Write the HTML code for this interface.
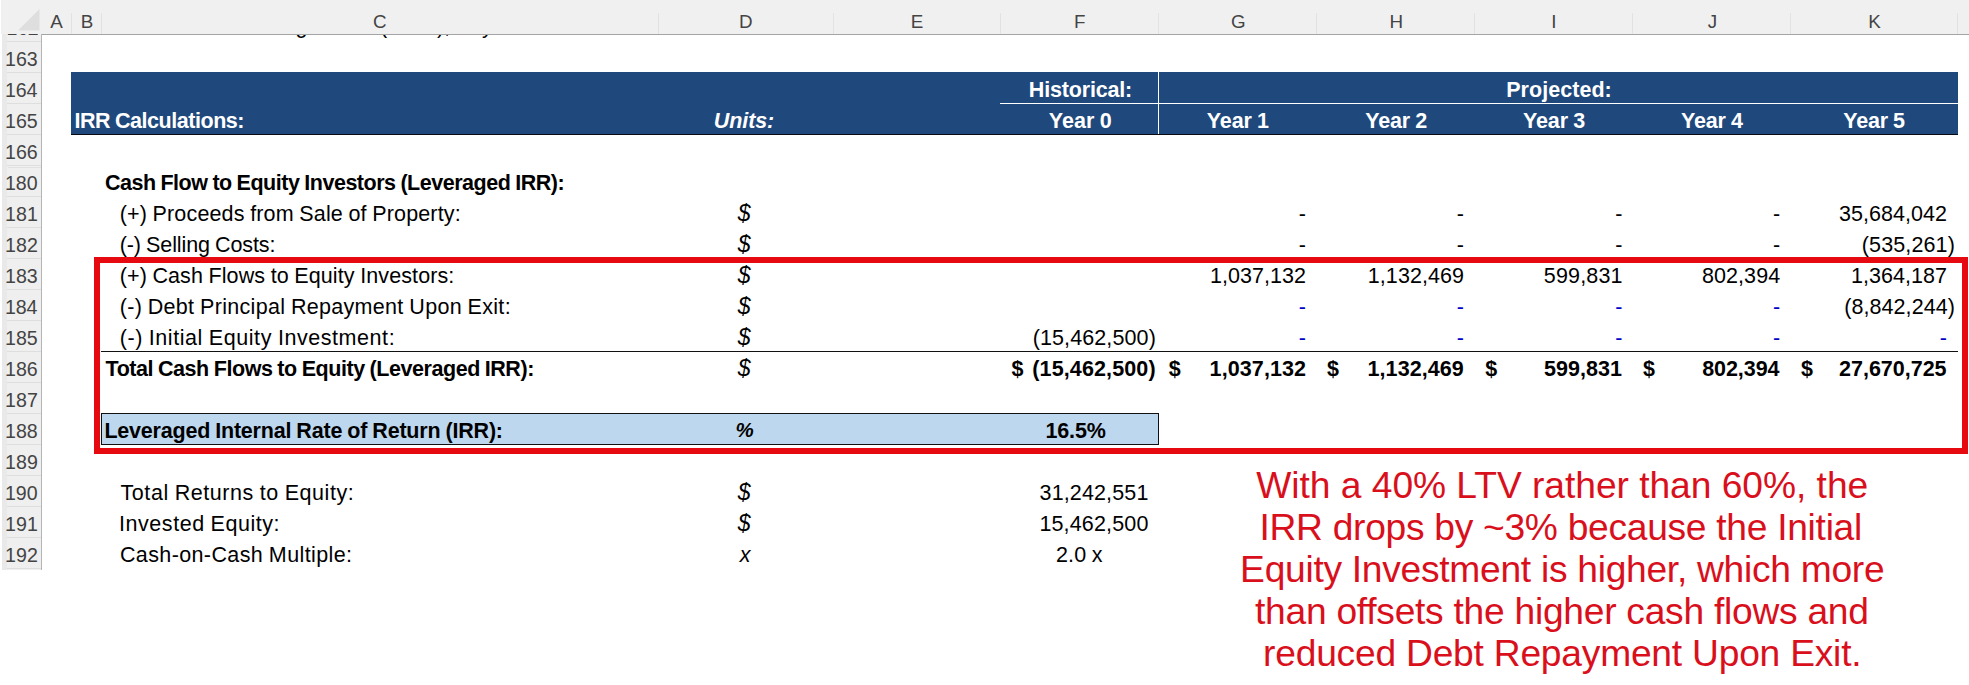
<!DOCTYPE html>
<html lang="en"><head><meta charset="utf-8"><title>IRR Calculations</title>
<style>
html,body{margin:0;padding:0;background:#fff}
body{width:1969px;height:685px;position:relative;overflow:hidden;font-family:"Liberation Sans",sans-serif}
.r{position:absolute}
.t{position:absolute;white-space:nowrap;line-height:1;font-family:"Liberation Sans",sans-serif;color:#000}
.b{font-weight:700}
.i{font-style:italic}
.note{position:absolute;text-align:center;white-space:nowrap;font-family:"Liberation Sans",sans-serif}
</style></head><body>
<div class="r" style="left:1px;top:0px;width:1968px;height:34px;background:#f0f0f0;"></div>
<div class="r" style="left:41px;top:34px;width:1928px;height:1px;background:#a4a4a4;"></div>
<div class="r" style="left:2px;top:34px;width:39px;height:536px;background:#efefef;"></div>
<div class="r" style="left:2px;top:34px;width:5px;height:536px;background:#e9e9e9;"></div>
<div class="r" style="left:41px;top:34px;width:1px;height:536px;background:#b4b4b4;"></div>
<svg class="r" style="left:0;top:0" width="42" height="34"><polygon points="39.5,9 39.5,30.5 18,30.5" fill="#dedede"/></svg>
<div class="r" style="left:71px;top:13px;width:1px;height:21px;background:#e2e2e2;"></div>
<div class="r" style="left:101px;top:13px;width:1px;height:21px;background:#e2e2e2;"></div>
<div class="r" style="left:658px;top:13px;width:1px;height:21px;background:#e2e2e2;"></div>
<div class="r" style="left:833px;top:13px;width:1px;height:21px;background:#e2e2e2;"></div>
<div class="r" style="left:1000px;top:13px;width:1px;height:21px;background:#e2e2e2;"></div>
<div class="r" style="left:1158px;top:13px;width:1px;height:21px;background:#e2e2e2;"></div>
<div class="r" style="left:1316px;top:13px;width:1px;height:21px;background:#e2e2e2;"></div>
<div class="r" style="left:1474px;top:13px;width:1px;height:21px;background:#e2e2e2;"></div>
<div class="r" style="left:1632px;top:13px;width:1px;height:21px;background:#e2e2e2;"></div>
<div class="r" style="left:1790px;top:13px;width:1px;height:21px;background:#e2e2e2;"></div>
<div class="r" style="left:1957px;top:13px;width:1px;height:21px;background:#e2e2e2;"></div>
<div class="t" style="left:50.15px;top:12.69px;font-size:18.8px;color:#444;">A</div>
<div class="t" style="left:80.67px;top:12.69px;font-size:18.8px;color:#444;">B</div>
<div class="t" style="left:373.09px;top:12.69px;font-size:18.8px;color:#444;">C</div>
<div class="t" style="left:739.00px;top:12.69px;font-size:18.8px;color:#444;">D</div>
<div class="t" style="left:910.87px;top:12.69px;font-size:18.8px;color:#444;">E</div>
<div class="t" style="left:1074.04px;top:12.69px;font-size:18.8px;color:#444;">F</div>
<div class="t" style="left:1230.90px;top:12.69px;font-size:18.8px;color:#444;">G</div>
<div class="t" style="left:1389.39px;top:12.69px;font-size:18.8px;color:#444;">H</div>
<div class="t" style="left:1551.17px;top:12.69px;font-size:18.8px;color:#444;">I</div>
<div class="t" style="left:1707.82px;top:12.69px;font-size:18.8px;color:#444;">J</div>
<div class="t" style="left:1868.24px;top:12.69px;font-size:18.8px;color:#444;">K</div>
<div class="r" style="left:7px;top:41px;width:34px;height:1px;background:#dedede;"></div>
<div class="r" style="left:7px;top:72px;width:34px;height:1px;background:#dedede;"></div>
<div class="t" style="left:4.93px;top:49.91px;font-size:19.6px;letter-spacing:0.060px;color:#444;">163</div>
<div class="r" style="left:7px;top:103px;width:34px;height:1px;background:#dedede;"></div>
<div class="t" style="left:4.93px;top:80.91px;font-size:19.6px;letter-spacing:-0.087px;color:#444;">164</div>
<div class="r" style="left:7px;top:134px;width:34px;height:1px;background:#dedede;"></div>
<div class="t" style="left:4.93px;top:111.91px;font-size:19.6px;letter-spacing:0.060px;color:#444;">165</div>
<div class="r" style="left:7px;top:165px;width:34px;height:1px;background:#dedede;"></div>
<div class="t" style="left:4.93px;top:142.91px;font-size:19.6px;letter-spacing:0.060px;color:#444;">166</div>
<div class="r" style="left:7px;top:196px;width:34px;height:1px;background:#dedede;"></div>
<div class="t" style="left:4.93px;top:173.91px;font-size:19.6px;letter-spacing:0.011px;color:#444;">180</div>
<div class="r" style="left:7px;top:227px;width:34px;height:1px;background:#dedede;"></div>
<div class="t" style="left:4.93px;top:204.91px;font-size:19.6px;letter-spacing:0.109px;color:#444;">181</div>
<div class="r" style="left:7px;top:258px;width:34px;height:1px;background:#dedede;"></div>
<div class="t" style="left:4.93px;top:235.91px;font-size:19.6px;letter-spacing:0.109px;color:#444;">182</div>
<div class="r" style="left:7px;top:289px;width:34px;height:1px;background:#dedede;"></div>
<div class="t" style="left:4.93px;top:266.91px;font-size:19.6px;letter-spacing:0.060px;color:#444;">183</div>
<div class="r" style="left:7px;top:320px;width:34px;height:1px;background:#dedede;"></div>
<div class="t" style="left:4.93px;top:297.91px;font-size:19.6px;letter-spacing:-0.087px;color:#444;">184</div>
<div class="r" style="left:7px;top:351px;width:34px;height:1px;background:#dedede;"></div>
<div class="t" style="left:4.93px;top:328.91px;font-size:19.6px;letter-spacing:0.060px;color:#444;">185</div>
<div class="r" style="left:7px;top:382px;width:34px;height:1px;background:#dedede;"></div>
<div class="t" style="left:4.93px;top:359.91px;font-size:19.6px;letter-spacing:0.060px;color:#444;">186</div>
<div class="r" style="left:7px;top:413px;width:34px;height:1px;background:#dedede;"></div>
<div class="t" style="left:4.93px;top:390.91px;font-size:19.6px;letter-spacing:0.109px;color:#444;">187</div>
<div class="r" style="left:7px;top:444px;width:34px;height:1px;background:#dedede;"></div>
<div class="t" style="left:4.93px;top:421.91px;font-size:19.6px;letter-spacing:0.060px;color:#444;">188</div>
<div class="r" style="left:7px;top:475px;width:34px;height:1px;background:#dedede;"></div>
<div class="t" style="left:4.93px;top:452.91px;font-size:19.6px;letter-spacing:0.109px;color:#444;">189</div>
<div class="r" style="left:7px;top:506px;width:34px;height:1px;background:#dedede;"></div>
<div class="t" style="left:4.93px;top:483.91px;font-size:19.6px;letter-spacing:0.011px;color:#444;">190</div>
<div class="r" style="left:7px;top:537px;width:34px;height:1px;background:#dedede;"></div>
<div class="t" style="left:4.93px;top:514.91px;font-size:19.6px;letter-spacing:0.109px;color:#444;">191</div>
<div class="r" style="left:7px;top:568px;width:34px;height:1px;background:#dedede;"></div>
<div class="t" style="left:4.93px;top:545.91px;font-size:19.6px;letter-spacing:0.109px;color:#444;">192</div>
<div class="r" style="left:8px;top:167px;width:33px;height:1px;background:#e2e2e2;"></div>
<div class="r" style="left:2px;top:34px;width:39px;height:1px;overflow:hidden"><div class="t" style="left:4.6px;top:-15.4px;font-size:19.6px;letter-spacing:-0.3px;color:#444">162</div></div>
<div class="r" style="left:101px;top:35px;width:560px;height:5px;overflow:hidden"><div class="t" style="left:194.5px;top:-19.2px;font-size:21.5px">g</div><div class="t" style="left:279px;top:-19.2px;font-size:21.5px">(</div><div class="t" style="left:336px;top:-19.2px;font-size:21.5px">),</div><div class="t" style="left:381px;top:-19.2px;font-size:21.5px">y</div></div>
<div class="r" style="left:71px;top:72px;width:1887px;height:62px;background:#1f497d;"></div>
<div class="r" style="left:71px;top:134px;width:1887px;height:1px;background:#0a0a14;"></div>
<div class="r" style="left:1000px;top:103px;width:958px;height:1px;background:#fff;"></div>
<div class="r" style="left:1158px;top:72px;width:1px;height:62px;background:#fff;"></div>
<div class="t b" style="left:74.40px;top:110.80px;font-size:21.5px;word-spacing:-0.6px;letter-spacing:-0.455px;color:#fff;">IRR Calculations:</div>
<div class="t b i" style="left:713.82px;top:111.00px;font-size:21.5px;letter-spacing:-0.099px;color:#fff;">Units:</div>
<div class="t b" style="left:1028.80px;top:80.40px;font-size:21.5px;letter-spacing:-0.169px;color:#fff;">Historical:</div>
<div class="t b" style="left:1506.20px;top:80.40px;font-size:21.5px;letter-spacing:0.045px;color:#fff;">Projected:</div>
<div class="t b" style="left:1048.68px;top:111.00px;font-size:21.5px;word-spacing:-0.6px;letter-spacing:0.072px;color:#fff;">Year 0</div>
<div class="t b" style="left:1206.68px;top:111.00px;font-size:21.5px;word-spacing:-0.6px;letter-spacing:-0.072px;color:#fff;">Year 1</div>
<div class="t b" style="left:1365.28px;top:111.00px;font-size:21.5px;word-spacing:-0.6px;letter-spacing:-0.188px;color:#fff;">Year 2</div>
<div class="t b" style="left:1522.98px;top:111.00px;font-size:21.5px;word-spacing:-0.6px;letter-spacing:-0.108px;color:#fff;">Year 3</div>
<div class="t b" style="left:1681.08px;top:111.00px;font-size:21.5px;word-spacing:-0.6px;letter-spacing:-0.199px;color:#fff;">Year 4</div>
<div class="t b" style="left:1843.28px;top:111.00px;font-size:21.5px;word-spacing:-0.6px;letter-spacing:-0.211px;color:#fff;">Year 5</div>
<div class="t b" style="left:104.94px;top:172.70px;font-size:21.5px;word-spacing:-0.6px;letter-spacing:-0.483px;">Cash Flow to Equity Investors (Leveraged IRR):</div>
<div class="t" style="left:119.71px;top:203.70px;font-size:21.5px;word-spacing:-0.6px;letter-spacing:0.153px;">(+) Proceeds from Sale of Property:</div>
<div class="t" style="left:119.71px;top:234.70px;font-size:21.5px;word-spacing:-0.6px;letter-spacing:-0.116px;">(-) Selling Costs:</div>
<div class="t" style="left:119.71px;top:265.70px;font-size:21.5px;word-spacing:-0.6px;letter-spacing:0.107px;">(+) Cash Flows to Equity Investors:</div>
<div class="t" style="left:119.71px;top:296.70px;font-size:21.5px;word-spacing:-0.6px;letter-spacing:0.304px;">(-) Debt Principal Repayment Upon Exit:</div>
<div class="t" style="left:119.71px;top:327.70px;font-size:21.5px;word-spacing:-0.6px;letter-spacing:0.560px;">(-) Initial Equity Investment:</div>
<div class="t b" style="left:105.58px;top:358.70px;font-size:21.5px;word-spacing:-0.6px;letter-spacing:-0.448px;">Total Cash Flows to Equity (Leveraged IRR):</div>
<div class="t" style="left:120.57px;top:482.70px;font-size:21.5px;word-spacing:-0.6px;letter-spacing:0.550px;">Total Returns to Equity:</div>
<div class="t" style="left:119.06px;top:513.70px;font-size:21.5px;word-spacing:-0.6px;letter-spacing:0.539px;">Invested Equity:</div>
<div class="t" style="left:119.92px;top:544.70px;font-size:21.5px;word-spacing:-0.6px;letter-spacing:0.383px;">Cash-on-Cash Multiple:</div>
<div class="r" style="left:101px;top:413px;width:1058px;height:32px;background:#bdd7ee;box-sizing:border-box;border:1px solid #111;"></div>
<div class="t b" style="left:104.40px;top:420.70px;font-size:21.5px;word-spacing:-0.6px;letter-spacing:-0.209px;">Leveraged Internal Rate of Return (IRR):</div>
<div class="t b i" style="left:735.38px;top:420.45px;font-size:20.5px;">%</div>
<div class="t b" style="left:1045.51px;top:420.70px;font-size:21.5px;letter-spacing:-0.156px;">16.5%</div>
<div class="t i" style="left:737.83px;top:202.43px;font-size:23px;">$</div>
<div class="t i" style="left:737.83px;top:233.43px;font-size:23px;">$</div>
<div class="t i" style="left:737.83px;top:264.43px;font-size:23px;">$</div>
<div class="t i" style="left:737.83px;top:295.43px;font-size:23px;">$</div>
<div class="t i" style="left:737.83px;top:326.43px;font-size:23px;">$</div>
<div class="t i" style="left:737.83px;top:357.43px;font-size:23px;">$</div>
<div class="t i" style="left:737.83px;top:481.43px;font-size:23px;">$</div>
<div class="t i" style="left:737.83px;top:512.43px;font-size:23px;">$</div>
<div class="t i" style="left:739.76px;top:544.70px;font-size:21.5px;">x</div>
<div class="r" style="left:101px;top:351px;width:1857px;height:1px;background:#111;"></div>
<div class="t" style="left:1298.64px;top:203.70px;font-size:21.5px;">-</div>
<div class="t" style="left:1456.84px;top:203.70px;font-size:21.5px;">-</div>
<div class="t" style="left:1615.24px;top:203.70px;font-size:21.5px;">-</div>
<div class="t" style="left:1772.94px;top:203.70px;font-size:21.5px;">-</div>
<div class="t" style="left:1298.64px;top:234.70px;font-size:21.5px;">-</div>
<div class="t" style="left:1456.84px;top:234.70px;font-size:21.5px;">-</div>
<div class="t" style="left:1615.24px;top:234.70px;font-size:21.5px;">-</div>
<div class="t" style="left:1772.94px;top:234.70px;font-size:21.5px;">-</div>
<div class="t" style="left:1298.64px;top:296.70px;font-size:21.5px;color:#0000c8;">-</div>
<div class="t" style="left:1456.84px;top:296.70px;font-size:21.5px;color:#0000c8;">-</div>
<div class="t" style="left:1615.24px;top:296.70px;font-size:21.5px;color:#0000c8;">-</div>
<div class="t" style="left:1772.94px;top:296.70px;font-size:21.5px;color:#0000c8;">-</div>
<div class="t" style="left:1298.64px;top:327.70px;font-size:21.5px;color:#0000c8;">-</div>
<div class="t" style="left:1456.84px;top:327.70px;font-size:21.5px;color:#0000c8;">-</div>
<div class="t" style="left:1615.24px;top:327.70px;font-size:21.5px;color:#0000c8;">-</div>
<div class="t" style="left:1772.94px;top:327.70px;font-size:21.5px;color:#0000c8;">-</div>
<div class="t" style="left:1939.64px;top:327.70px;font-size:21.5px;color:#0000c8;">-</div>
<div class="t" style="left:1838.95px;top:203.70px;font-size:21.5px;letter-spacing:0.046px;">35,684,042</div>
<div class="t" style="left:1861.81px;top:234.70px;font-size:21.5px;letter-spacing:0.119px;">(535,261)</div>
<div class="t" style="left:1209.89px;top:265.70px;font-size:21.5px;letter-spacing:0.051px;">1,037,132</div>
<div class="t" style="left:1367.79px;top:265.70px;font-size:21.5px;letter-spacing:0.076px;">1,132,469</div>
<div class="t" style="left:1543.84px;top:265.70px;font-size:21.5px;letter-spacing:0.151px;">599,831</div>
<div class="t" style="left:1701.94px;top:265.70px;font-size:21.5px;letter-spacing:0.079px;">802,394</div>
<div class="t" style="left:1850.89px;top:265.70px;font-size:21.5px;letter-spacing:0.051px;">1,364,187</div>
<div class="t" style="left:1844.21px;top:296.70px;font-size:21.5px;letter-spacing:0.071px;">(8,842,244)</div>
<div class="t" style="left:1032.71px;top:327.70px;font-size:21.5px;letter-spacing:0.106px;">(15,462,500)</div>
<div class="t b" style="left:1011.38px;top:358.70px;font-size:21.5px;">$</div>
<div class="t b" style="left:1168.79px;top:358.70px;font-size:21.5px;">$</div>
<div class="t b" style="left:1327.09px;top:358.70px;font-size:21.5px;">$</div>
<div class="t b" style="left:1485.29px;top:358.70px;font-size:21.5px;">$</div>
<div class="t b" style="left:1643.09px;top:358.70px;font-size:21.5px;">$</div>
<div class="t b" style="left:1801.09px;top:358.70px;font-size:21.5px;">$</div>
<div class="t b" style="left:1032.33px;top:358.70px;font-size:21.5px;letter-spacing:0.121px;">(15,462,500)</div>
<div class="t b" style="left:1209.61px;top:358.70px;font-size:21.5px;letter-spacing:0.096px;">1,037,132</div>
<div class="t b" style="left:1367.51px;top:358.70px;font-size:21.5px;letter-spacing:0.083px;">1,132,469</div>
<div class="t b" style="left:1544.06px;top:358.70px;font-size:21.5px;letter-spacing:0.043px;">599,831</div>
<div class="t b" style="left:1702.15px;top:358.70px;font-size:21.5px;letter-spacing:-0.046px;">802,394</div>
<div class="t b" style="left:1839.06px;top:358.70px;font-size:21.5px;letter-spacing:-0.014px;">27,670,725</div>
<div class="t" style="left:1039.55px;top:482.70px;font-size:21.5px;letter-spacing:0.135px;">31,242,551</div>
<div class="t" style="left:1039.39px;top:513.70px;font-size:21.5px;letter-spacing:0.162px;">15,462,500</div>
<div class="t" style="left:1056.02px;top:544.70px;font-size:21.5px;word-spacing:-0.6px;letter-spacing:0.134px;">2.0 x</div>
<div class="r" style="left:94px;top:257px;width:1874px;height:197px;box-sizing:border-box;border:6px solid #e60a10"></div>
<div class="t" style="left:1256.30px;top:466.81px;font-size:37.2px;letter-spacing:-0.039px;color:#d9101c;">With a 40% LTV rather than 60%, the</div>
<div class="t" style="left:1259.45px;top:508.81px;font-size:37.2px;letter-spacing:-0.288px;color:#d9101c;">IRR drops by ~3% because the Initial</div>
<div class="t" style="left:1240.12px;top:550.81px;font-size:37.2px;letter-spacing:-0.282px;color:#d9101c;">Equity Investment is higher, which more</div>
<div class="t" style="left:1255.04px;top:592.91px;font-size:37.2px;letter-spacing:-0.264px;color:#d9101c;">than offsets the higher cash flows and</div>
<div class="t" style="left:1263.08px;top:635.11px;font-size:37.2px;letter-spacing:-0.223px;color:#d9101c;">reduced Debt Repayment Upon Exit.</div>
</body></html>
